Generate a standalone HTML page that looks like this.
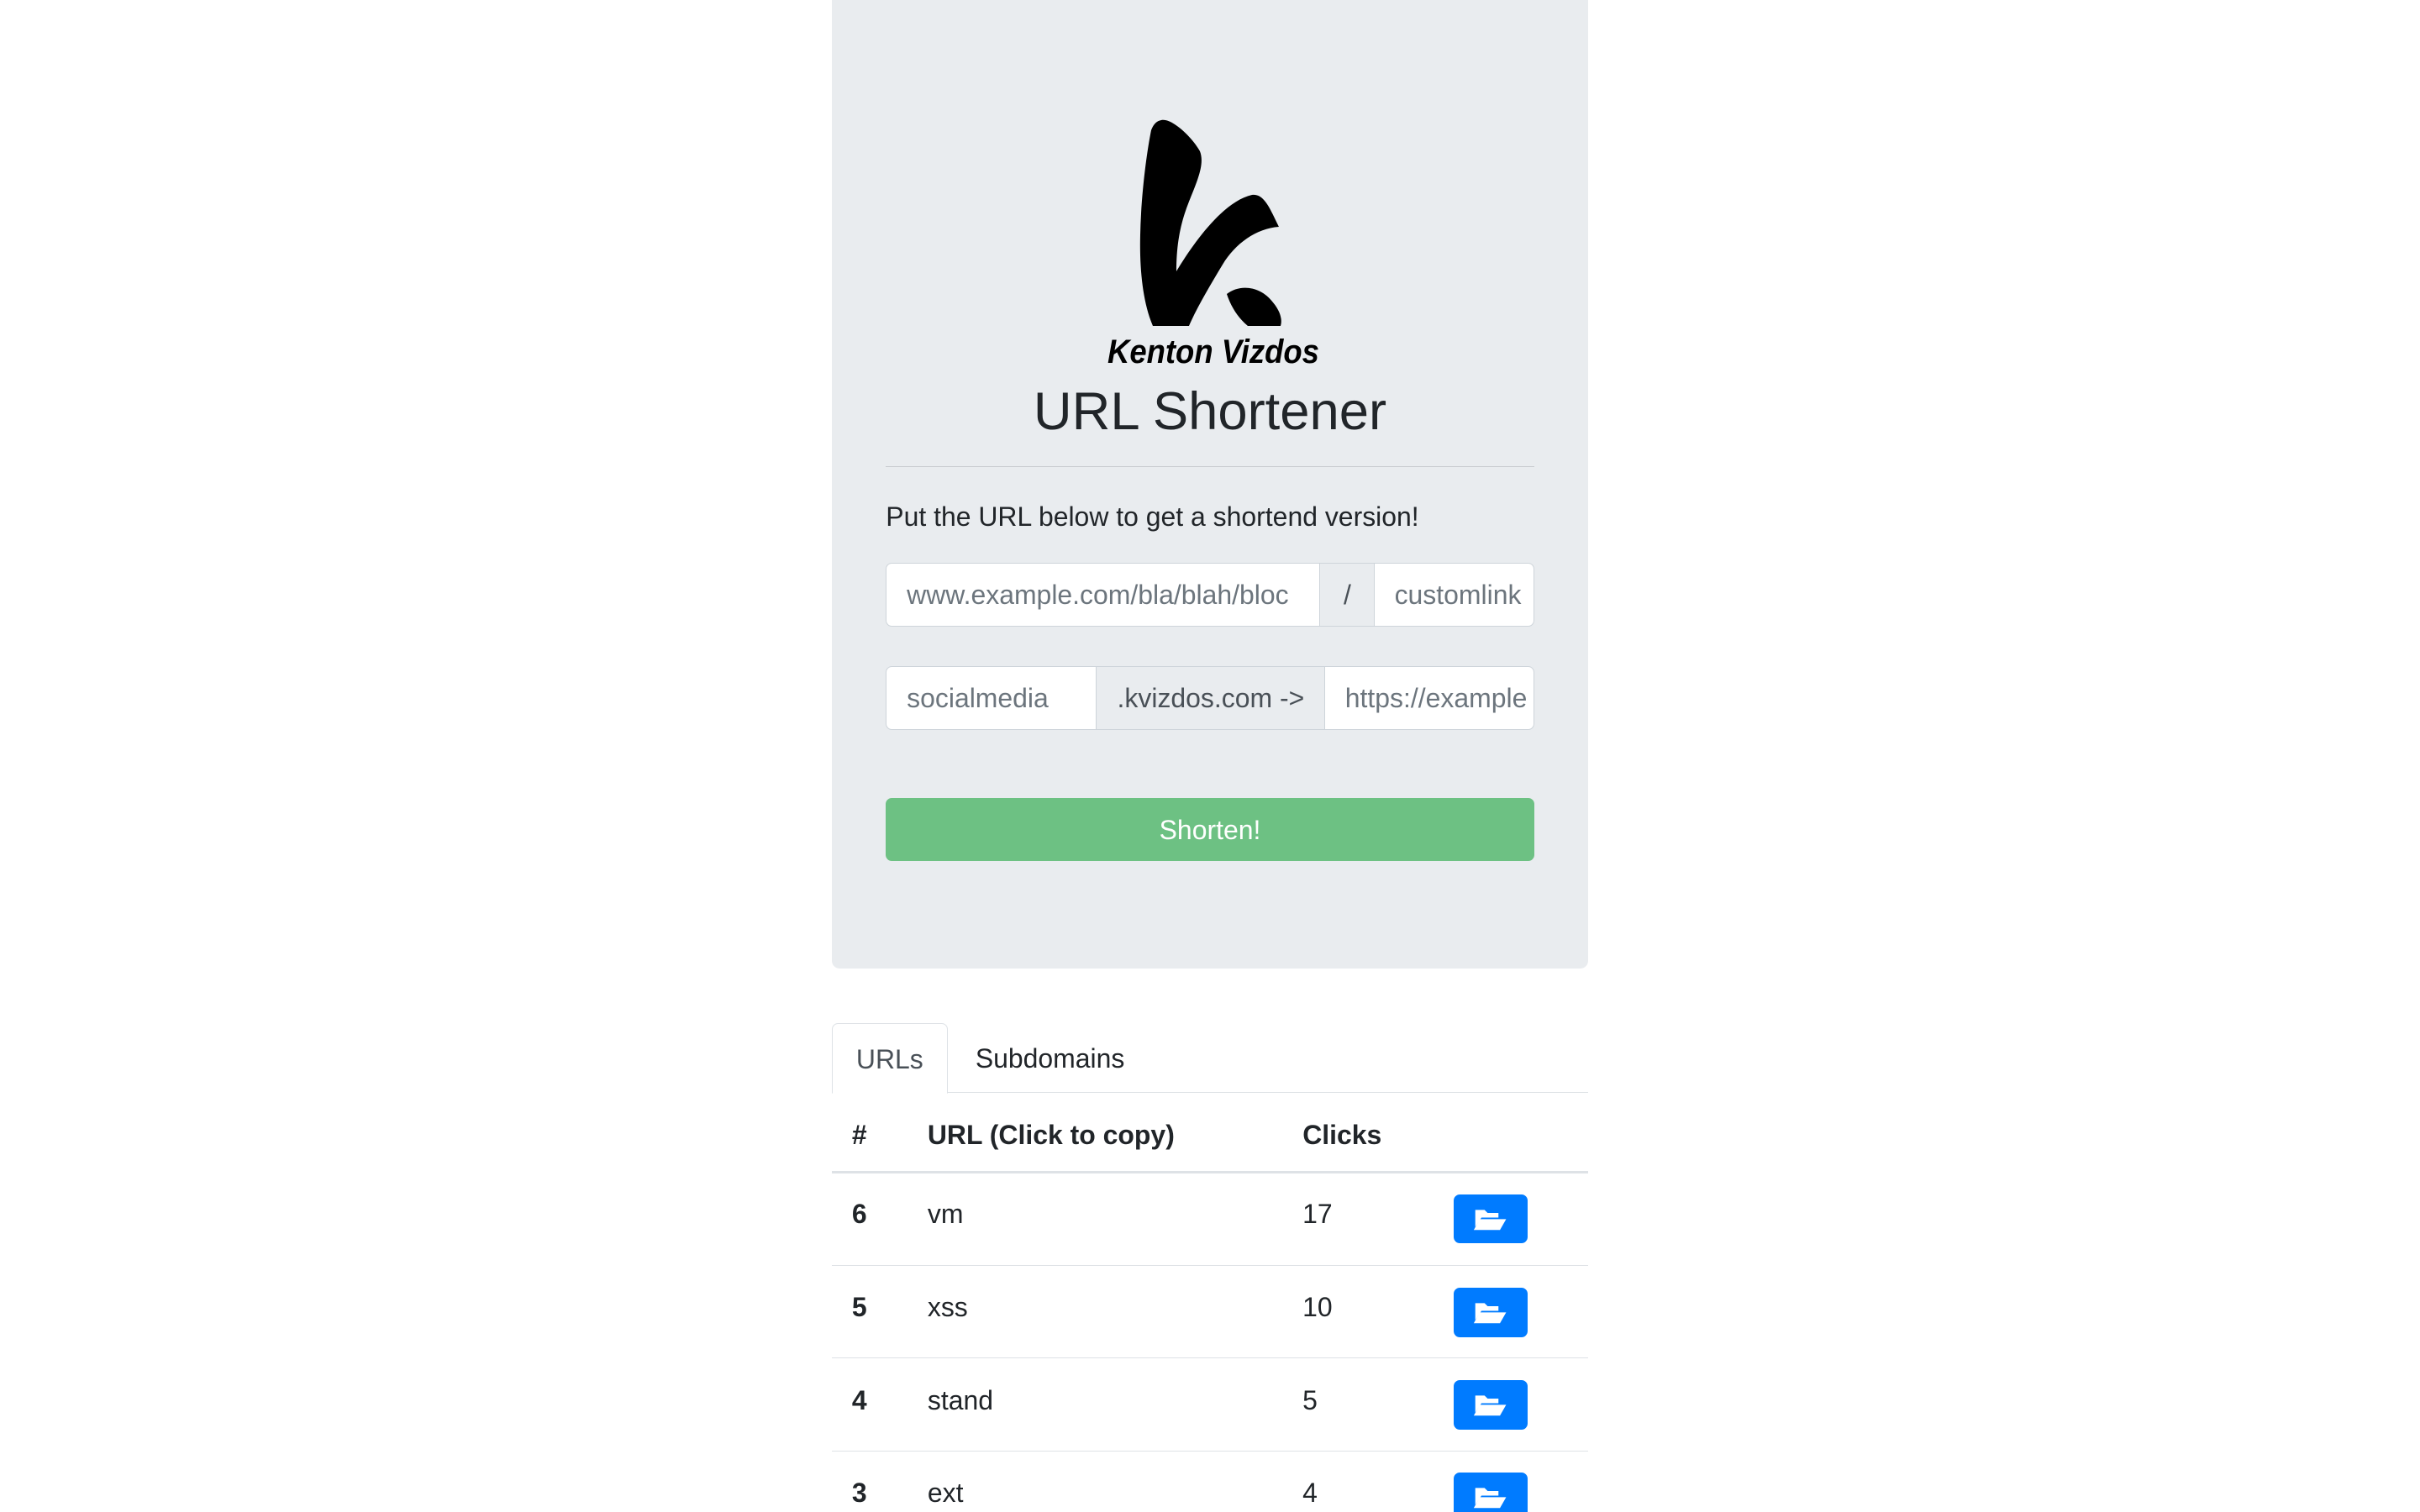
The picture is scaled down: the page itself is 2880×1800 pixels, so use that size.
<!DOCTYPE html>
<html><head><style>
*{box-sizing:border-box;margin:0;padding:0}
html,body{width:2880px;height:1800px;overflow:hidden;background:#fff}
#w{zoom:1.83673;position:relative;width:1568px;height:980px;font-family:"Liberation Sans",sans-serif;color:#212529;font-size:17.4px}
.a{position:absolute}
.card{left:539px;top:0;width:490px;height:628px;background:#e9ecef;border-radius:0 0 5px 5px}
.inp{position:absolute;height:41px;border:1px solid #ced4da;background:#fff;color:#6c757d;line-height:41px;padding-left:13px;white-space:nowrap;overflow:hidden;font-size:17.4px}
.add{position:absolute;height:41px;border:1px solid #ced4da;background:#e9ecef;color:#495057;line-height:41px;text-align:center}
.row{position:absolute;left:539px;width:490px;height:60px;border-top:1px solid #dee2e6}
.row span{position:absolute;top:17px}
.btn{position:absolute;left:403px;top:14px;width:48px;height:32px;background:#007bff;border-radius:4px}
</style></head><body><div id="w">
<div class="a card"></div>
<svg class="a" style="left:707.8px;top:65.3px;overflow:visible" width="163.3" height="179.7" viewBox="1300 120 300 330">
<path d="M1382 143 C1395 140 1420 165 1428 180 C1434 195 1425 215 1415 240 C1405 265 1400 290 1400 323 C1420 290 1455 240 1490 232 C1505 230 1512 250 1522 270 C1495 272 1470 290 1455 315 C1440 340 1425 365 1415 388 L1372 388 C1360 360 1356 320 1357 280 C1358 230 1365 180 1370 155 C1373 147 1377 144 1382 143Z" fill="#000"/>
<path d="M1460 350 C1475 338 1500 340 1515 360 C1525 372 1526 382 1524 388 L1485 388 C1473 378 1465 365 1460 350Z" fill="#000"/>
<text x="1318" y="432" font-family="Liberation Sans" font-weight="bold" font-style="italic" font-size="40" textLength="252" lengthAdjust="spacingAndGlyphs" fill="#000">Kenton Vizdos</text>
</svg>
<div class="a" style="left:539px;width:490px;top:247px;text-align:center;font-size:34.5px;font-weight:500">URL Shortener</div>
<div class="a" style="left:574px;width:420px;top:302px;border-top:1px solid #c8cbcf"></div>
<div class="a" style="left:574px;top:325px">Put the URL below to get a shortend version!</div>
<div class="inp" style="left:574px;top:365px;width:282px;border-radius:4px 0 0 4px">www.example.com/bla/blah/bloc</div>
<div class="add" style="left:855px;top:365px;width:36px">/</div>
<div class="inp" style="left:890px;top:365px;width:104px;border-radius:0 4px 4px 0">customlink</div>
<div class="inp" style="left:574px;top:432px;width:137px;border-radius:4px 0 0 4px">socialmedia</div>
<div class="add" style="left:710px;top:432px;width:149px">.kvizdos.com -&gt;</div>
<div class="inp" style="left:858px;top:432px;width:136px;border-radius:0 4px 4px 0">https://example</div>
<div class="a" style="left:574px;top:517px;width:420px;height:41px;background:#6dc183;border-radius:4px;color:#fff;text-align:center;line-height:42px">Shorten!</div>
<div class="a" style="left:539px;top:708px;width:490px;border-top:1px solid #dee2e6"></div>
<div class="a" style="left:539px;top:663px;width:75px;height:46px;border:1px solid #dee2e6;border-bottom:1px solid #fff;border-radius:4px 4px 0 0;background:#fff;color:#495057;text-align:center;line-height:46px">URLs</div>
<div class="a" style="left:632px;top:676px;color:#212529">Subdomains</div>
<div class="a" style="left:552px;top:726px;font-weight:bold">#</div>
<div class="a" style="left:601px;top:726px;font-weight:bold">URL (Click to copy)</div>
<div class="a" style="left:844px;top:726px;font-weight:bold">Clicks</div>
<div class="a" style="left:539px;top:759px;width:490px;border-top:2px solid #dee2e6"></div>
<div class="row" style="top:760px;border-top:none"><span style="left:13px;font-weight:bold">6</span><span style="left:62px">vm</span><span style="left:305px">17</span><div class="btn"><svg width="48" height="32" viewBox="0 0 48 32"><path d="M14 10h6l2 2h7v3H18l-4 6z" fill="#fff"/><path d="M17 16h17l-4 7H13z" fill="#fff"/></svg></div></div>
<div class="row" style="top:820px"><span style="left:13px;font-weight:bold">5</span><span style="left:62px">xss</span><span style="left:305px">10</span><div class="btn"><svg width="48" height="32" viewBox="0 0 48 32"><path d="M14 10h6l2 2h7v3H18l-4 6z" fill="#fff"/><path d="M17 16h17l-4 7H13z" fill="#fff"/></svg></div></div>
<div class="row" style="top:880px"><span style="left:13px;font-weight:bold">4</span><span style="left:62px">stand</span><span style="left:305px">5</span><div class="btn"><svg width="48" height="32" viewBox="0 0 48 32"><path d="M14 10h6l2 2h7v3H18l-4 6z" fill="#fff"/><path d="M17 16h17l-4 7H13z" fill="#fff"/></svg></div></div>
<div class="row" style="top:940px"><span style="left:13px;font-weight:bold">3</span><span style="left:62px">ext</span><span style="left:305px">4</span><div class="btn"><svg width="48" height="32" viewBox="0 0 48 32"><path d="M14 10h6l2 2h7v3H18l-4 6z" fill="#fff"/><path d="M17 16h17l-4 7H13z" fill="#fff"/></svg></div></div>
</div></body></html>
